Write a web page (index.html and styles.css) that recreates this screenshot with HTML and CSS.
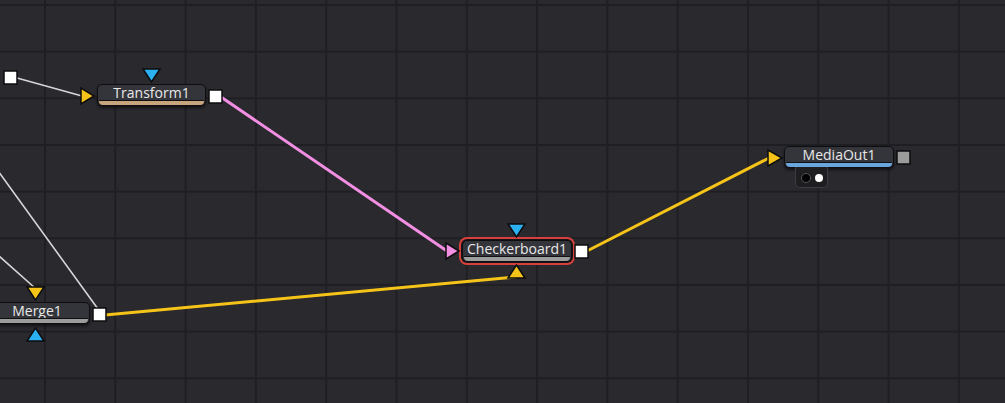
FILE: index.html
```html
<!DOCTYPE html>
<html lang="en">
  <head>
    <meta charset="UTF-8" />
    <meta name="viewport" content="width=device-width, initial-scale=1.0" />
    <title>Node graph</title>
    <link rel="stylesheet" href="styles.css">
  </head>
  <body>
    <div class="graph">
      <!-- nodes -->
      <div class="node node-transform stripe-tan">
        <span class="label">Transform1</span>
      </div>
      <div class="node node-checker stripe-gray selected">
        <span class="label">Checkerboard1</span>
      </div>
      <div class="node node-mediaout stripe-blue">
        <span class="label">MediaOut1</span>
      </div>
      <div class="views">
        <span class="dot dot-black"></span>
        <span class="dot dot-white"></span>
      </div>
      <div class="node node-merge stripe-gray">
        <span class="label">Merge1</span>
      </div>

      <!-- wires and ports -->
      <svg class="wires" width="1005" height="403" viewBox="0 0 1005 403">
        <g class="wire wire-white">
          <line x1="17" y1="78" x2="82" y2="96" />
          <line x1="-20" y1="146" x2="98" y2="309" />
          <line x1="-20" y1="239" x2="35" y2="288" />
        </g>
        <line class="wire wire-pink" x1="221" y1="97" x2="447" y2="251" />
        <line class="wire wire-yellow" x1="587" y1="251" x2="769" y2="158" />
        <line class="wire wire-yellow" x1="105" y1="315" x2="516" y2="277" />

        <g class="port">
          <polygon class="yellow" points="81,88 81,104 94,96" />
          <polygon class="blue" points="143,69 160,69 151.5,82" />
          <polygon class="pink" points="446,243 446,259 459,251" />
          <polygon class="blue" points="508,224 525,224 516.5,237" />
          <polygon class="yellow" points="508,278 525,278 516.5,265" />
          <polygon class="yellow" points="768,150 768,166 782,158" />
          <polygon class="yellow" points="27,287 44,287 35.5,300" />
          <polygon class="blue" points="27,341 44,341 35.5,328" />

          <rect class="out" x="4" y="71" width="13" height="13" />
          <rect class="out" x="209" y="90" width="13" height="13" />
          <rect class="out" x="575" y="245" width="13" height="13" />
          <rect class="out" x="93" y="308" width="13" height="13" />
          <rect class="out out-off" x="897" y="151" width="13" height="13" />
        </g>
      </svg>
    </div>
  </body>
</html>
```

FILE: styles.css
```css
:root {
  --bg-color: #29292e;
  --grid-color: #1f1f23;
  --node-color: #34353b;
  --text-color: #e8e8e8;
  --yellow: #f6c419;
  --blue: #2bb0f0;
  --pink: #f28fe3;
  --font-family: "Open Sans", "Liberation Sans", sans-serif;
}
* {
  margin: 0;
  padding: 0;
  box-sizing: border-box;
}
body {
  background-color: var(--bg-color);
  font-family: var(--font-family);
}
.graph {
  position: relative;
  width: 1005px;
  height: 403px;
  overflow: hidden;
  background-color: var(--bg-color);
  background-image:
    linear-gradient(to right, var(--grid-color) 0 2px, transparent 2px),
    linear-gradient(to bottom, var(--grid-color) 0 2px, transparent 2px);
  background-size: 70.3px 46.67px;
  background-position: 44px 4px;
}
.wires {
  position: absolute;
  left: 0;
  top: 0;
  pointer-events: none;
}
.wire {
  fill: none;
  stroke-linecap: round;
}
.wire-white {
  stroke: #d6d6d6;
  stroke-width: 1.6;
}
.wire-pink {
  stroke: var(--pink);
  stroke-width: 3;
}
.wire-yellow {
  stroke: var(--yellow);
  stroke-width: 3;
}
.port polygon,
.port rect {
  stroke: #0c0c0e;
  stroke-width: 1.5;
  stroke-linejoin: miter;
}
.port .yellow {
  fill: var(--yellow);
}
.port .blue {
  fill: var(--blue);
}
.port .pink {
  fill: var(--pink);
}
.port .out {
  fill: #ffffff;
}
.port .out-off {
  fill: #9c9c9c;
}

/* nodes */
.node {
  position: absolute;
  height: 22px;
  display: flex;
  align-items: center;
  justify-content: center;
  padding-bottom: 5px;
  background-color: var(--node-color);
  border: 1px solid #0e0e10;
  border-radius: 5px;
  box-shadow: 0 2px 3px rgba(0, 0, 0, 0.55);
  color: var(--text-color);
  font-size: 14px;
  line-height: 1;
  white-space: nowrap;
}
.node::after {
  content: "";
  position: absolute;
  left: 1px;
  right: 1px;
  bottom: 0;
  height: 4px;
  border-top: 1px solid #111114;
  border-radius: 0 0 4px 4px;
}
.stripe-tan::after {
  background-color: #c9a57e;
}
.stripe-gray::after {
  background-color: #9d9d9d;
}
.stripe-blue::after {
  background-color: #6ba5dd;
}
.selected {
  box-shadow: 0 0 0 1px #151517, 0 0 0 3px #d7403c;
}
.node-transform {
  left: 97px;
  top: 84px;
  width: 109px;
}
.node-checker {
  left: 462px;
  top: 240px;
  width: 110px;
}
.node-mediaout {
  left: 784px;
  top: 146px;
  width: 110px;
}
.node-merge {
  left: -20px;
  top: 302px;
  width: 110px;
}
.node-merge .label {
  margin-left: 4px;
}

/* viewer buttons under MediaOut */
.views {
  position: absolute;
  left: 795px;
  top: 167px;
  width: 33px;
  height: 21px;
  display: flex;
  align-items: center;
  justify-content: center;
  gap: 4px;
  padding-top: 1px;
  background-color: #1e1e21;
  border: 1px solid #3c3c42;
  border-top: none;
  border-radius: 0 0 5px 5px;
}
.dot {
  border-radius: 50%;
}
.dot-black {
  width: 10px;
  height: 10px;
  background-color: #000000;
  border: 1px solid #55555a;
}
.dot-white {
  width: 8px;
  height: 8px;
  background-color: #ffffff;
}
```
